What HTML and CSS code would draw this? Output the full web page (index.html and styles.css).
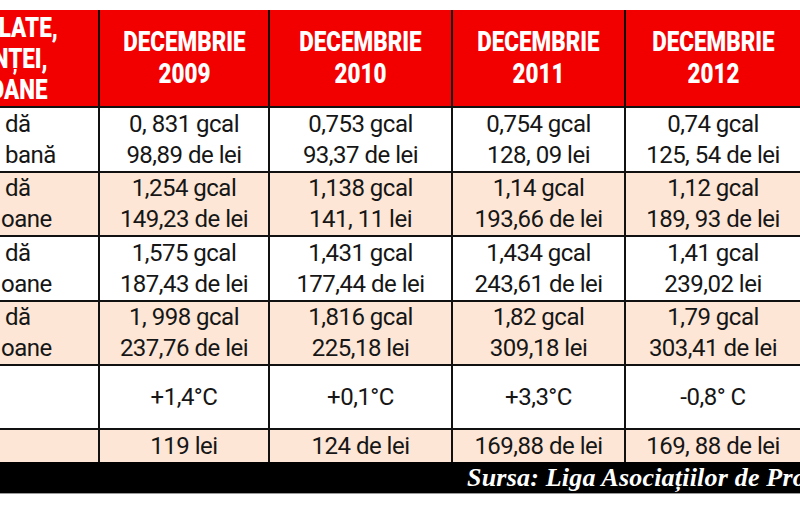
FILE: index.html
```html
<!DOCTYPE html>
<html lang="ro">
<head>
<meta charset="utf-8">
<title>Apă caldă decembrie 2009-2012</title>
<link rel="stylesheet" href="styles.css">
</head>
<body>
<div class="page">
  <div class="grid">
    <div class="cell head first">
      <span class="hl hl1">LATE,</span>
      <span class="hl hl2">NȚEI,</span>
      <span class="hl hl3">OANE</span>
    </div>
    <div class="cell head"><span class="ht">DECEMBRIE<br>2009</span></div>
    <div class="cell head"><span class="ht">DECEMBRIE<br>2010</span></div>
    <div class="cell head"><span class="ht">DECEMBRIE<br>2011</span></div>
    <div class="cell head"><span class="ht">DECEMBRIE<br>2012</span></div>

    <div class="cell lab"><span class="fa">dă</span><span class="fa">bană</span></div>
    <div class="cell">0, 831 gcal<br>98,89 de lei</div>
    <div class="cell">0,753 gcal<br>93,37 de lei</div>
    <div class="cell">0,754 gcal<br>128, 09 lei</div>
    <div class="cell">0,74 gcal<br>125, 54 de lei</div>

    <div class="cell lab alt"><span class="fa">dă</span><span class="fb">oane</span></div>
    <div class="cell alt">1,254 gcal<br>149,23 de lei</div>
    <div class="cell alt">1,138 gcal<br>141, 11 lei</div>
    <div class="cell alt">1,14 gcal<br>193,66 de lei</div>
    <div class="cell alt">1,12 gcal<br>189, 93 de lei</div>

    <div class="cell lab"><span class="fa">dă</span><span class="fb">oane</span></div>
    <div class="cell">1,575 gcal<br>187,43 de lei</div>
    <div class="cell">1,431 gcal<br>177,44 de lei</div>
    <div class="cell">1,434 gcal<br>243,61 de lei</div>
    <div class="cell">1,41 gcal<br>239,02 lei</div>

    <div class="cell lab alt"><span class="fa">dă</span><span class="fb">oane</span></div>
    <div class="cell alt">1, 998 gcal<br>237,76 de lei</div>
    <div class="cell alt">1,816 gcal<br>225,18 lei</div>
    <div class="cell alt">1,82 gcal<br>309,18 lei</div>
    <div class="cell alt">1,79 gcal<br>303,41 de lei</div>

    <div class="cell lab"></div>
    <div class="cell">+1,4°C</div>
    <div class="cell">+0,1°C</div>
    <div class="cell">+3,3°C</div>
    <div class="cell">-0,8° C</div>

    <div class="cell lab alt"></div>
    <div class="cell alt">119 lei</div>
    <div class="cell alt">124 de lei</div>
    <div class="cell alt">169,88 de lei</div>
    <div class="cell alt">169, 88 de lei</div>
  </div>
  <div class="source">Sursa: Liga Asociațiilor de Proprietari</div>
</div>
</body>
</html>
```
FILE: styles.css
```css
html, body {
  margin: 0;
  padding: 0;
  background: #ffffff;
}

.page {
  width: 800px;
  height: 506px;
  overflow: hidden;
  padding-top: 10px;
  box-sizing: border-box;
}

.grid {
  display: grid;
  grid-template-columns: 98px 168px 181px 171px 174px;
  grid-template-rows: 96px 63px 62px 63px 62px 62px 32px;
  column-gap: 2px;
  row-gap: 2px;
  background: #111111;
  width: 800px;
}

.cell {
  background: #ffffff;
  color: #161616;
  font-family: Roboto, "Liberation Sans", sans-serif;
  font-size: 24px;
  line-height: 31px;
  letter-spacing: -0.5px;
  text-align: center;
  display: flex;
  flex-direction: column;
  justify-content: center;
  align-items: center;
  overflow: hidden;
  white-space: nowrap;
}

.cell.alt {
  background: #fde6d6;
}

.head {
  background: #f20000;
  color: #ffffff;
  font-weight: 900;
  font-size: 28px;
  line-height: 32px;
  letter-spacing: 0;
}

.ht {
  display: inline-block;
  transform: scaleX(0.8);
}

.head.first {
  align-items: flex-end;
  line-height: 31px;
}

.hl {
  display: block;
  transform: scaleX(0.8);
  transform-origin: right center;
}

.hl1 { margin-right: 40px; }
.hl2 { margin-right: 50px; }
.hl3 { margin-right: 51px; }

.lab {
  align-items: flex-start;
}

.fa {
  display: block;
  margin-left: 5px;
}

.fb {
  display: block;
  margin-left: 1px;
}

.source {
  background: #000000;
  color: #ffffff;
  height: 31px;
  border-bottom: 1px solid #9a9a9a;
  font-family: "Liberation Serif", "DejaVu Serif", serif;
  font-style: italic;
  font-weight: bold;
  font-size: 26px;
  line-height: 31px;
  letter-spacing: 0.2px;
  padding-left: 467px;
  white-space: nowrap;
  overflow: hidden;
}
```
